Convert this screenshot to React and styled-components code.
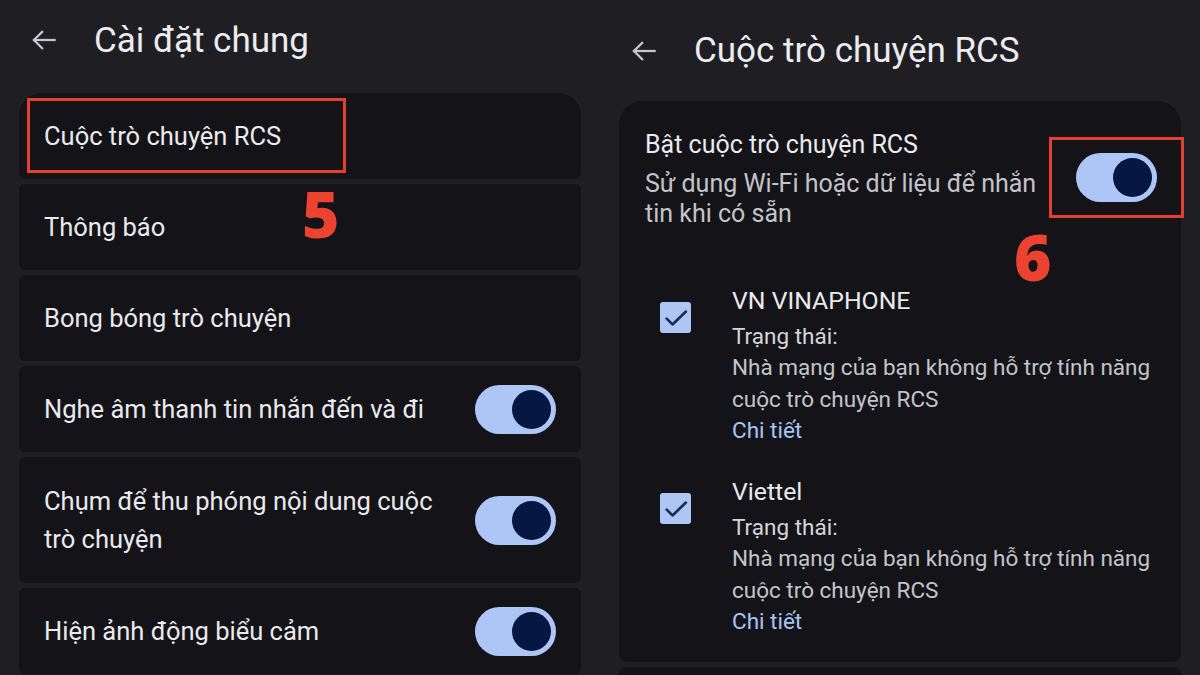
import React from 'react'
import styled, { createGlobalStyle } from 'styled-components'

const GlobalStyle = createGlobalStyle`
  html, body {
    margin: 0;
    padding: 0;
    background: #1f1f23;
  }
  body {
    font-family: Roboto, "Noto Sans", "Liberation Sans", sans-serif;
    color: #e6e6ea;
    width: 1200px;
    height: 675px;
    overflow: hidden;
  }
`

const leftItems = [
  { label: 'Cuộc trò chuyện RCS', highlight: true },
  { label: 'Thông báo' },
  { label: 'Bong bóng trò chuyện' },
  { label: 'Nghe âm thanh tin nhắn đến và đi', toggle: true },
  { label: 'Chụm để thu phóng nội dung cuộc trò chuyện', toggle: true, tall: true },
  { label: 'Hiện ảnh động biểu cảm', toggle: true },
]

const carriers = ['VN VINAPHONE', 'Viettel']

function BackArrow() {
  return (
    <svg width="30" height="30" viewBox="0 0 24 24" fill="none" stroke="#c6c6cc" strokeWidth="1.8" strokeLinecap="square">
      <path d="M20.5 12H4" />
      <path d="M10.5 5.5L4 12l6.5 6.5" />
    </svg>
  )
}

function Check() {
  return (
    <svg width="28" height="28" viewBox="0 0 24 24" fill="none" stroke="#1d2b57" strokeWidth="2.3" strokeLinecap="round" strokeLinejoin="round">
      <path d="M4 12.5l5 5L20.5 6.5" />
    </svg>
  )
}

function App() {
  return (
    <>
      <GlobalStyle />
      <Page>
        <Column>
          <Header $height={93} $bottom={13}>
            <BackArrow />
            <Title>Cài đặt chung</Title>
          </Header>
          <List>
            {leftItems.map((item, i) => (
              <Row key={i} $first={i === 0} $tall={item.tall}>
                <RowLabel $wrap={item.tall}>{item.label}</RowLabel>
                {item.toggle && <Toggle />}
                {item.highlight && <MarkBox />}
                {i === 1 && <StepNumber $left={283} $top={6}>5</StepNumber>}
              </Row>
            ))}
          </List>
        </Column>

        <Column>
          <Header $height={101} $bottom={0}>
            <BackArrow />
            <Title>Cuộc trò chuyện RCS</Title>
          </Header>
          <Card>
            <MainRow>
              <MainText>
                <MainTitle>Bật cuộc trò chuyện RCS</MainTitle>
                <MainSub>Sử dụng Wi-Fi hoặc dữ liệu để nhắn tin khi có sẵn</MainSub>
              </MainText>
              <ToggleFrame>
                <Toggle />
              </ToggleFrame>
              <StepNumber $left={369} $top={104}>6</StepNumber>
            </MainRow>
            <Carriers>
              {carriers.map((name) => (
                <Carrier key={name}>
                  <CheckBox><Check /></CheckBox>
                  <CarrierText>
                    <CarrierName>{name}</CarrierName>
                    <Status>Trạng thái:</Status>
                    <Detail>Nhà mạng của bạn không hỗ trợ tính năng cuộc trò chuyện RCS</Detail>
                    <Link>Chi tiết</Link>
                  </CarrierText>
                </Carrier>
              ))}
            </Carriers>
          </Card>
          <NextCard />
        </Column>
      </Page>
    </>
  )
}

export default App

const Page = styled.div`
  display: grid;
  grid-template-columns: 562px 562px;
  column-gap: 38px;
  padding: 0 19px;
  height: 675px;
  overflow: hidden;
`

const Column = styled.div`
  display: flex;
  flex-direction: column;
  min-width: 0;
`

const Header = styled.div`
  height: ${(p) => p.$height}px;
  display: flex;
  align-items: center;
  gap: 35px;
  padding-left: 10px;
  padding-bottom: ${(p) => p.$bottom}px;
  box-sizing: border-box;
  flex-shrink: 0;
`

const Title = styled.h1`
  margin: 0;
  font-size: 35px;
  font-weight: 400;
  color: #ececf0;
`

const List = styled.div`
  display: flex;
  flex-direction: column;
  gap: 5px;
`

const Row = styled.div`
  position: relative;
  display: flex;
  align-items: center;
  justify-content: space-between;
  background: #141418;
  height: ${(p) => (p.$tall ? 126 : 86)}px;
  padding: 0 25px;
  box-sizing: border-box;
  border-radius: ${(p) => (p.$first ? '22px 22px 6px 6px' : '6px')};
  flex-shrink: 0;
`

const RowLabel = styled.div`
  font-size: 25.5px;
  line-height: 38px;
  color: #eaeaee;
  max-width: ${(p) => (p.$wrap ? '400px' : 'none')};
`

const Toggle = styled.div`
  position: relative;
  width: 81px;
  height: 49px;
  border-radius: 25px;
  background: #aec6f6;
  flex-shrink: 0;

  &::after {
    content: '';
    position: absolute;
    right: 5px;
    top: 5px;
    width: 39px;
    height: 39px;
    border-radius: 50%;
    background: #061743;
  }
`

const MarkBox = styled.div`
  position: absolute;
  left: 8px;
  top: 5px;
  width: 319px;
  height: 75px;
  border: 3px solid #e5402f;
  box-sizing: border-box;
`

const StepNumber = styled.div`
  position: absolute;
  left: ${(p) => p.$left}px;
  top: ${(p) => p.$top}px;
  font-family: "Open Sans", "DejaVu Sans", sans-serif;
  font-weight: 800;
  font-size: 64px;
  line-height: 48px;
  color: #ec4330;
`

const Card = styled.div`
  background: #141418;
  border-radius: 24px 24px 8px 8px;
  padding: 28px 25px 28px 26px;
  box-sizing: border-box;
  height: 561px;
  flex-shrink: 0;
`

const NextCard = styled.div`
  margin-top: 5px;
  height: 40px;
  background: #141418;
  border-radius: 6px;
  flex-shrink: 0;
`

const MainRow = styled.div`
  position: relative;
  display: flex;
  align-items: flex-start;
  justify-content: space-between;
`

const MainText = styled.div`
  width: 400px;
`

const MainTitle = styled.div`
  font-size: 25px;
  line-height: 31px;
  color: #eaeaee;
`

const MainSub = styled.div`
  font-size: 25px;
  line-height: 29.5px;
  color: #c3c4ca;
  margin-top: 9px;
`

const ToggleFrame = styled.div`
  margin-top: 8px;
  margin-right: -28px;
  padding: 13px 24px;
  border: 3px solid #e5402f;
`

const Carriers = styled.div`
  display: flex;
  flex-direction: column;
  gap: 30px;
  margin-top: 57px;
`

const Carrier = styled.div`
  display: flex;
  align-items: flex-start;
  gap: 41px;
  padding-left: 15px;
`

const CheckBox = styled.div`
  width: 31px;
  height: 31px;
  margin-top: 17px;
  border-radius: 3px;
  background: #aec6f6;
  display: flex;
  align-items: center;
  justify-content: center;
  flex-shrink: 0;
`

const CarrierText = styled.div`
  display: flex;
  flex-direction: column;
`

const CarrierName = styled.div`
  font-size: 24.8px;
  line-height: 32px;
  color: #eaeaee;
`

const Status = styled.div`
  font-size: 22.5px;
  line-height: 31px;
  color: #d6d6da;
  margin-top: 4px;
`

const Detail = styled.div`
  font-size: 22.5px;
  line-height: 31.5px;
  color: #c3c4ca;
  width: 420px;
`

const Link = styled.div`
  font-size: 22.5px;
  line-height: 31px;
  color: #a8c5f5;
`
